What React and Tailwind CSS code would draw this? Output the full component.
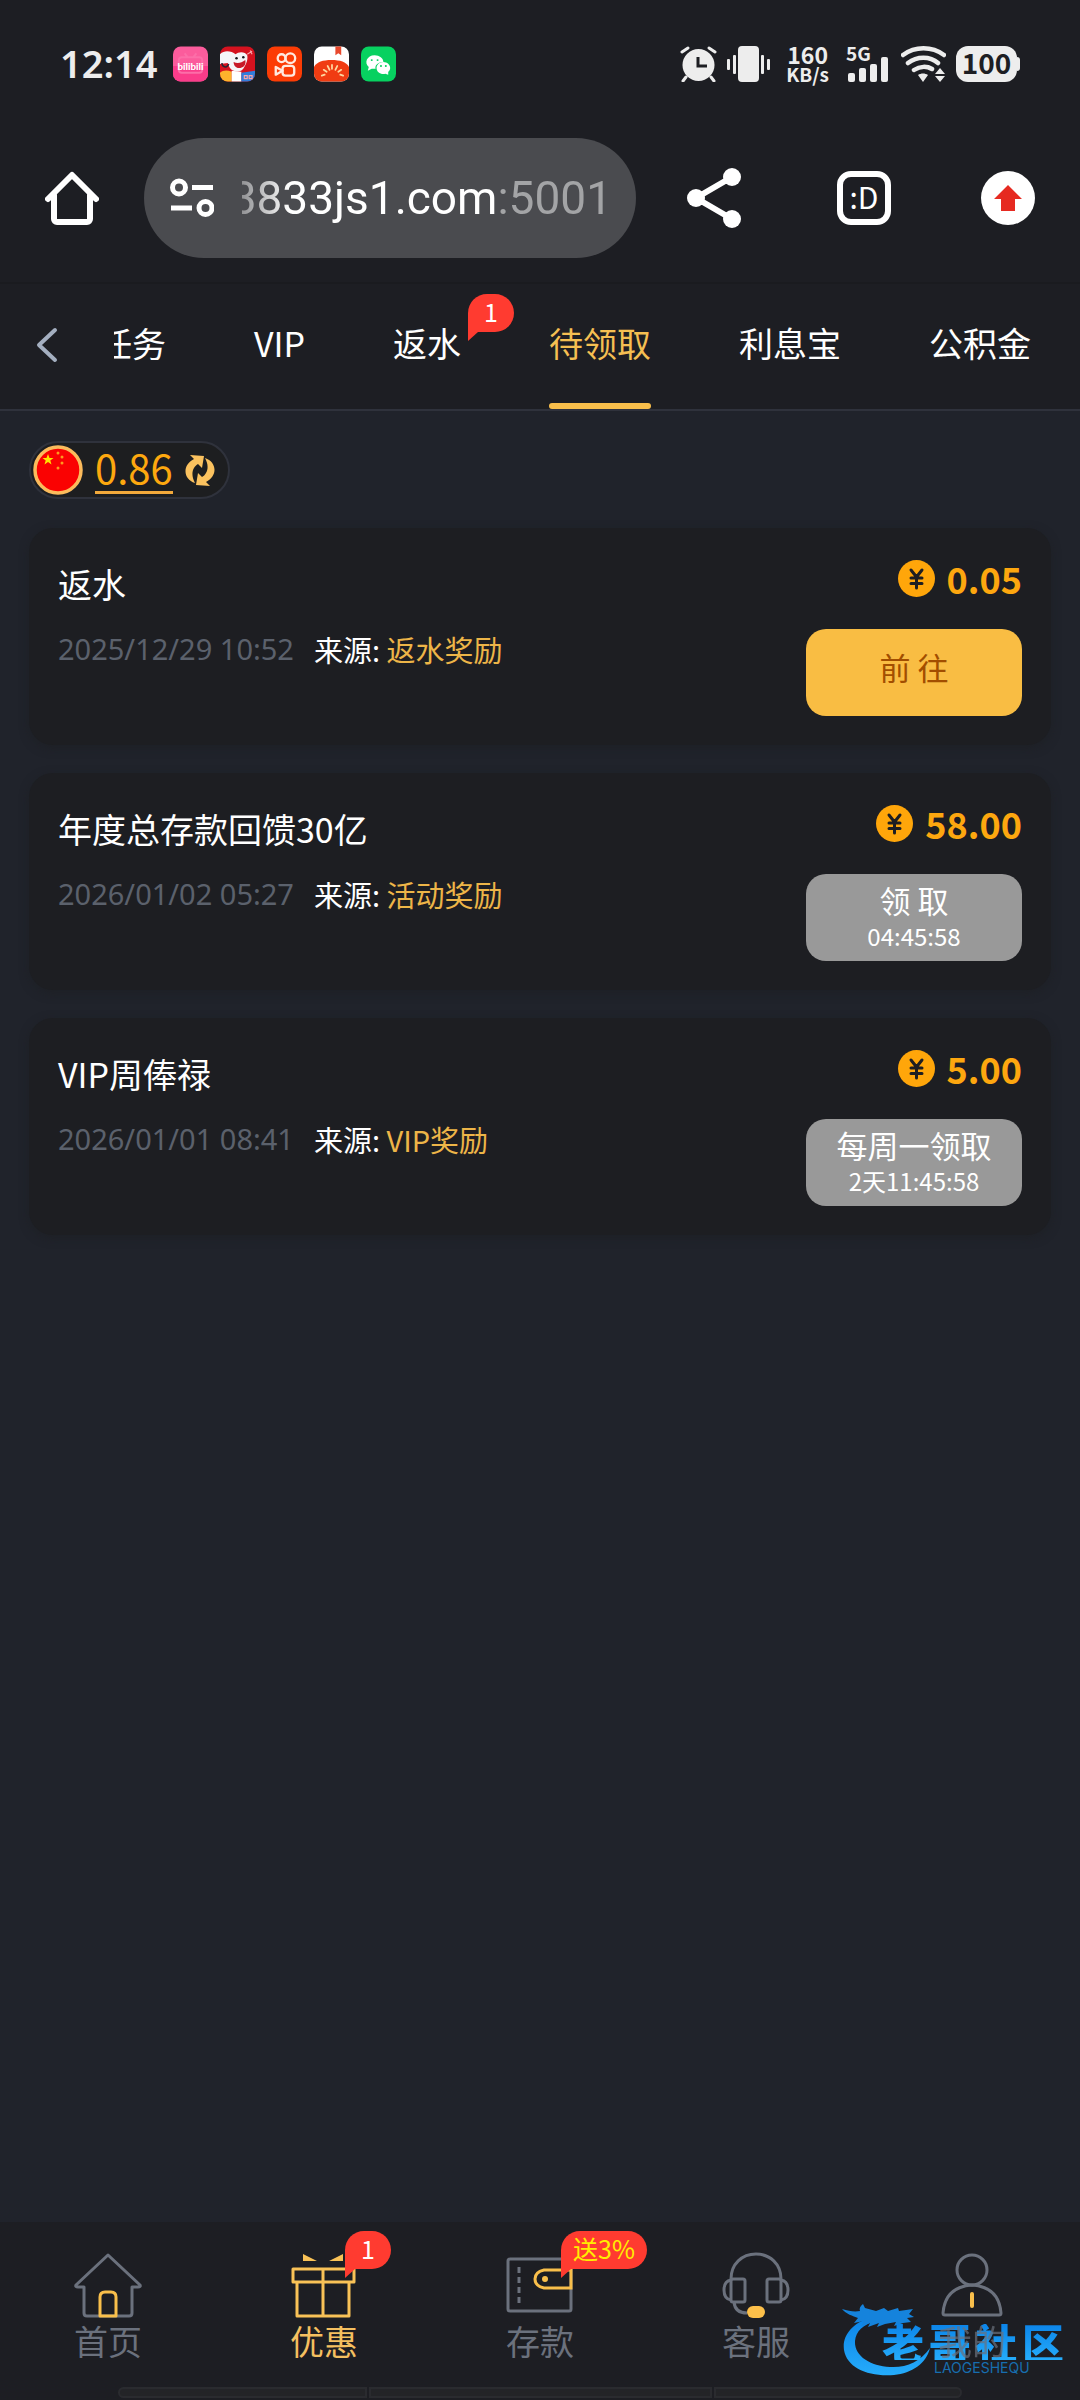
const tabs = [
    { name: "任务" },
    { name: "VIP" },
    { name: "返水", badge: "1" },
    { name: "待领取", active: true },
    { name: "利息宝" },
    { name: "公积金" },
];

const rewards = [
    { title: "返水", date: "2025/12/29 10:52", source: "返水奖励", amount: "0.05", action: "前 往", ready: true },
    { title: "年度总存款回馈30亿", date: "2026/01/02 05:27", source: "活动奖励", amount: "58.00", action: "领 取", timer: "04:45:58" },
    { title: "VIP周俸禄", date: "2026/01/01 08:41", source: "VIP奖励", amount: "5.00", action: "每周一领取", timer: "2天11:45:58" },
];

const navItems = [
    { name: "首页", icon: NavHome },
    { name: "优惠", icon: NavGift, badge: "1", active: true },
    { name: "存款", icon: NavWallet, badge: "送3%", yellow: true },
    { name: "客服", icon: NavSupport },
    { name: "我的", icon: NavUser, faded: true },
];

function AppIcons() {
    return (
        <div className="flex gap-3">
            <svg className="h-9 w-[35px]" viewBox="0 0 36 36">
                <rect width="36" height="36" rx="8" fill="#fb5c9c" />
                <path d="M0 20h36v8a8 8 0 0 1-8 8H8a8 8 0 0 1-8-8z" fill="#fa3c8a" />
                <path d="M12 7l3 4M24 7l-3 4M9 11h18a3 3 0 0 1 3 3v10a3 3 0 0 1-3 3H9a3 3 0 0 1-3-3V14a3 3 0 0 1 3-3z" fill="none" stroke="#fc6ea8" strokeWidth="2" />
                <text x="18" y="24" textAnchor="middle" fontSize="10" fontWeight="900" fontFamily="Lato, sans-serif" fill="#fff">bilibili</text>
            </svg>
            <svg className="h-9 w-[35px]" viewBox="0 0 36 36">
                <rect width="36" height="36" rx="8" fill="#d5121f" />
                <path d="M0 8C5 3 12 5 16 8c3-3 10-3 12 1 1 4-1 9-3 12-2 4-6 6-11 4C11 24 9 21 8 17L0 18z" fill="#f5f5f8" />
                <path d="M0 27c3-3 8-3 12-1v10H8a8 8 0 0 1-8-8z" fill="#fdb32c" />
                <path d="M12 25l10 1v10H12z" fill="#fff" />
                <path d="M22 27l14-2v3a8 8 0 0 1-8 8h-6z" fill="#317ddc" />
                <path d="M14 16c4 2 8 1 12-2 1 4-1 8-5 8-4 1-7-2-7-6z" fill="#c81a28" />
                <path d="M2 17c0 4 5 6 7 1" fill="none" stroke="#292532" strokeWidth="1.5" />
                <circle cx="17" cy="12" r="1.3" fill="#17171c" />
                <circle cx="24" cy="11" r="1.3" fill="#17171c" />
                <path d="M28 8l5-3M31 4l2 4M25 30h3v3h-3zM30 30h3v3h-3z" fill="none" stroke="#fba3a8" strokeWidth="1.2" />
            </svg>
            <svg className="h-9 w-[35px]" viewBox="0 0 36 36">
                <rect width="36" height="36" rx="8" fill="#fc3c05" />
                <g fill="none" stroke="#ffe9df" strokeWidth="2.4" strokeLinejoin="round">
                    <circle cx="15" cy="12" r="4" />
                    <circle cx="24" cy="12" r="5" />
                    <rect x="16" y="20" width="12" height="10" rx="3" />
                    <path d="M16 25l-7-4v8z" />
                </g>
            </svg>
            <svg className="h-9 w-[35px]" viewBox="0 0 36 36">
                <rect width="36" height="36" rx="8" fill="#fff" />
                <path d="M22 0h6v9l-3-2-3 2z" fill="#e8482c" />
                <path d="M0 21c3-5 9-7 18-7s15 2 18 7v7a8 8 0 0 1-8 8H8a8 8 0 0 1-8-8z" fill="#f03c12" />
                <path d="M8 30l3-1M10 24l3 2M14 20l2 4M18.500 19v4M24 20l-2 4M28 24l-3 2M30 30l-3-1" stroke="#ffd9a0" strokeWidth="1.8" strokeLinecap="round" />
            </svg>
            <svg className="h-9 w-[35px]" viewBox="0 0 36 36">
                <rect width="36" height="36" rx="8" fill="#07d160" />
                <path d="M14 9c5 0 9 3 9 7-5 0-9 3-8 7h-4l-4 2 1-4c-5-4-2-12 6-12z" fill="#fff" />
                <path d="M23 16c4 0 7 3 7 6 0 2-1 3-2 4v3l-3-1c-5 1-9-2-9-6 0-3 3-6 7-6z" fill="#fff" />
                <path d="M11 14h.1M17 14h.1M20.500 20h.1M25.500 20h.1" stroke="#07d160" strokeWidth="2" strokeLinecap="round" />
            </svg>
        </div>
    );
}

function StatusBar() {
    return (
        <div className="flex h-[128px] items-center justify-between pr-[60px] pl-[60px]">
            <div className="flex items-center gap-4">
                <span className="pb-0.5 font-['Noto_Sans','Noto_Sans_CJK_SC',sans-serif] text-[38px] leading-none font-semibold text-[#ededed]">12:14</span>
                <AppIcons />
            </div>
            <div className="flex items-center text-[#ededed]">
                <svg className="h-9 w-[37px]" viewBox="0 0 37 36" fill="none">
                    <circle cx="18.500" cy="19" r="16" fill="currentColor" />
                    <path d="M2 6l6-4M35 6l-6-4M6 31l-3 4M31 31l3 4" stroke="currentColor" strokeWidth="3" strokeLinecap="round" />
                    <path d="M18 11v9h9" stroke="#1d1e23" strokeWidth="3" />
                </svg>
                <svg className="ml-2.5 h-9 w-[43px]" viewBox="0 0 43 36" fill="currentColor">
                    <rect x="11" width="21" height="36" rx="4" />
                    <rect x="6" y="9" width="3" height="19" rx="1" />
                    <rect x="34" y="9" width="3" height="19" rx="1" />
                    <rect x="0" y="13" width="3" height="11" rx="1" />
                    <rect x="40" y="13" width="3" height="11" rx="1" />
                </svg>
                <div className="ml-4 flex flex-col items-center pb-0.5 font-bold">
                    <span className="text-[23px] leading-[22px]">160</span>
                    <span className="text-[19px] leading-[18px]">KB/s</span>
                </div>
                <svg className="ml-[17px] h-9 w-[43px] overflow-visible" viewBox="0 0 43 36" fill="currentColor">
                    <text x="0" y="15" fontSize="19" fontWeight="700">5G</text>
                    <rect x="2" y="27" width="7" height="9" rx="2" />
                    <rect x="13" y="22" width="7" height="14" rx="2" />
                    <rect x="24" y="18" width="7" height="18" rx="2" />
                    <rect x="35" y="11" width="7" height="25" rx="2" />
                </svg>
                <svg className="ml-3 h-9 w-[45px]" viewBox="0 0 45 36" fill="none">
                    <path d="M2 9c12-9 29-9 41 0M7 17c9-7 22-7 30 0M13 24c6-4 13-4 18-1" stroke="currentColor" strokeWidth="4.500" strokeLinecap="round" />
                    <path d="M17 29c3-2 7-2 10 0l-5 7zM34 28l5-6 5 6zM34 30h10l-5 6z" fill="currentColor" />
                </svg>
                <div className="ml-2.5 flex items-center">
                    <span className="flex h-9 w-[61px] items-center justify-center rounded-xl bg-[#ededed] pb-1 text-[28px] leading-none font-bold text-[#1d1e23]">100</span>
                    <span className="h-3.5 w-[3px] rounded-r-sm bg-[#ededed]" />
                </div>
            </div>
        </div>
    );
}

function BrowserBar() {
    return (
        <div className="flex items-center border-b-2 border-[#1a1b1f] px-[45px] pt-2.5 pb-6 text-white">
            <button aria-label="主页">
                <svg className="size-[54px]" viewBox="0 0 54 54" fill="none" stroke="currentColor" strokeWidth="6" strokeLinejoin="round" strokeLinecap="round">
                    <path d="M3 28L27 4l24 24M9 24v24a3 3 0 0 0 3 3h30a3 3 0 0 0 3-3V24" />
                </svg>
            </button>
            <button className="ml-[45px] flex h-[120px] min-w-0 flex-1 items-center gap-7 rounded-full bg-[#4a4b4f] pr-6 pl-[26px]">
                <svg className="h-10 w-11 shrink-0" viewBox="0 0 44 40" fill="none" stroke="currentColor" strokeWidth="5">
                    <circle cx="9" cy="9.500" r="6.500" />
                    <circle cx="35.500" cy="30" r="6.500" />
                    <path d="M22 9.500h21M1 30h21" />
                </svg>
                <span className="flex min-w-0 flex-1 justify-end overflow-hidden font-[Roboto,'Noto_Sans_CJK_SC',sans-serif] text-[46px] leading-[60px] whitespace-nowrap [mask-image:linear-gradient(to_right,#0006,black_48px)]">
                    3833js1.com<span className="text-[#a3a4a6]">:5001</span>
                </span>
            </button>
            <button aria-label="分享" className="ml-[51px]">
                <svg className="h-[60px] w-[54px]" viewBox="0 0 54 60" fill="currentColor">
                    <path d="M45 9L9 30l36 21" fill="none" stroke="currentColor" strokeWidth="6" />
                    <circle cx="45" cy="9" r="9" />
                    <circle cx="9" cy="30" r="9" />
                    <circle cx="45" cy="51" r="9" />
                </svg>
            </button>
            <button className="ml-24 flex size-[54px] items-center justify-center rounded-[14px] border-[6px] border-white pb-1 text-[30px] leading-none">:D</button>
            <button aria-label="更新" className="ml-[90px] flex size-[54px] items-center justify-center rounded-full bg-white">
                <svg className="h-[26px] w-7" viewBox="0 0 28 26" fill="#e62a21">
                    <path d="M14 0l14 14h-7v12H7V14H0z" />
                </svg>
            </button>
        </div>
    );
}

function Badge({ children, yellow }) {
    return (
        <span className={`flex h-[38px] min-w-[46px] items-center justify-center rounded-full rounded-bl-none bg-[#ff3b30] px-3 pb-1 text-[25px] leading-none whitespace-nowrap ${yellow ? "text-[#ffee00]" : "text-white"}`}>
            {children}
            <svg className="absolute top-full left-0 h-[9px] w-2.5" viewBox="0 0 10 9" fill="#ff3b30">
                <path d="M0 0h10L0 9z" />
            </svg>
        </span>
    );
}

function TabBar() {
    return (
        <div className="flex h-[127px] items-stretch border-b-2 border-[#2f323c]">
            <button aria-label="返回" className="flex w-[114px] shrink-0 items-center pb-1 pl-9 text-[#a4afc0]">
                <svg className="h-9 w-[22px]" viewBox="0 0 22 36" fill="none" stroke="currentColor" strokeWidth="4" strokeLinecap="round" strokeLinejoin="round">
                    <path d="M19 3L3 18l16 15" />
                </svg>
            </button>
            <div className="flex min-w-0 flex-1 overflow-hidden">
                <div className="-ml-4 flex gap-[88px]">
                    {tabs.map((tab) => (
                        <button key={tab.name} className={`relative shrink-0 pb-2 text-[34px] leading-none whitespace-nowrap ${tab.active ? "text-[#f5bf52]" : "text-white"}`}>
                            {tab.name}
                            {tab.active && <span className="absolute inset-x-0 bottom-0 h-1.5 rounded-full bg-[#f9bf4b]" />}
                            {tab.badge && <span className="absolute top-2.5 left-full ml-[7px]"><Badge>{tab.badge}</Badge></span>}
                        </button>
                    ))}
                </div>
            </div>
        </div>
    );
}

function Balance() {
    return (
        <div className="flex h-[58px] w-[201px] items-center rounded-full border-2 border-[#2f323c] bg-[#1d1e20] pl-0.5">
            <svg className="size-[50px]" viewBox="0 0 50 50">
                <circle cx="25" cy="25" r="23" fill="#fa0202" stroke="#fbbb5c" strokeWidth="3.500" />
                <path d="M15 9l1.500 4h4l-3.200 2.500 1.200 4L15 17l-3.500 2.500 1.200-4L9.500 13h4z" fill="#ffe600" />
                <g fill="#ff9a1f">
                    <circle cx="25" cy="8" r="1.500" />
                    <circle cx="29" cy="12" r="1.500" />
                    <circle cx="29" cy="18" r="1.500" />
                    <circle cx="25" cy="23" r="1.500" />
                </g>
            </svg>
            <span className="ml-3 border-b-3 border-[#f2a93b] pb-1 text-[40px] leading-10 text-[#fda80f]">0.86</span>
            <button aria-label="刷新" className="ml-3">
                <svg className="h-[31px] w-[30px]" viewBox="0 0 30 31" fill="#fbc25f">
                    <path d="M5 0l14 1-2 12-4-4c-5 3-8 10-3 19C-2 24-3 10 9 4z" />
                    <path d="M25 31l-14-1 2-12 4 4c5-3 8-10 3-19 12 4 13 18 1 24z" />
                </svg>
            </button>
        </div>
    );
}

function RewardCard({ reward }) {
    return (
        <li className="flex h-[217px] justify-between rounded-3xl bg-[#1d1e22] px-[29px] shadow-[0_3px_10px_#1d1e2299]">
            <div className="flex flex-col gap-[22px] pt-[33px]">
                <h2 className="text-[34px] leading-[46px] text-white">{reward.title}</h2>
                <p className="flex gap-5 text-[29px] leading-10 text-white">
                    <time className="font-['Noto_Sans',sans-serif] text-[#5b616c]">{reward.date}</time>
                    <span>来源: <span className="text-[#edb548]">{reward.source}</span></span>
                </p>
            </div>
            <div className="flex flex-col items-end gap-[25px] pt-6">
                <div className="flex items-center gap-3">
                    <svg className="size-[37px]" viewBox="0 0 37 37" fill="none">
                        <circle cx="18.500" cy="18.500" r="18.500" fill="#ffa60a" />
                        <path d="M13 10l5.500 7 5.500-7M18.500 17v11M13 18h11M13 23.500h11" stroke="#1d1e22" strokeWidth="3" strokeLinecap="round" />
                    </svg>
                    <strong className="text-4xl leading-[52px] font-bold text-[#fda70f]">{reward.amount}</strong>
                </div>
                <button className={`flex h-[87px] w-[216px] flex-col items-center rounded-[20px] text-[31px] ${reward.ready ? "bg-[#f9bd43] pt-5 text-[#a24e00]" : "bg-[#999999] pt-2 text-white"}`}>
                    <span className="leading-9">{reward.action}</span>
                    {reward.timer && <span className="text-2xl leading-9">{reward.timer}</span>}
                </button>
            </div>
        </li>
    );
}

function NavHome() {
    return (
        <svg className="h-[66px] w-[68px]" viewBox="0 0 68 66" fill="none" stroke="#6b717d" strokeWidth="3" strokeLinejoin="round">
            <path d="M34 3L2 33q-1 2 2 2h6v26q0 3 3 3h42q3 0 3-3V35h6q3 0 2-2z" />
            <path d="M26 64V45q0-5 5-5h6q5 0 5 5v19z" stroke="#f9bf4b" strokeWidth="3" />
        </svg>
    );
}

function NavGift() {
    return (
        <svg className="h-[66px] w-[68px]" viewBox="0 0 68 66" fill="none" stroke="#f9c257" strokeWidth="3" strokeLinejoin="round">
            <rect x="3" y="17" width="61" height="13" />
            <path d="M7 30v34h52V30M33 17v47" />
            <path d="M13 2v7h14zM53 2v7H39z" fill="#f9c257" stroke="none" />
        </svg>
    );
}

function NavWallet() {
    return (
        <svg className="h-[66px] w-[68px]" viewBox="0 0 68 66" fill="none" stroke="#6b717d" strokeWidth="3">
            <rect x="2" y="7" width="63" height="52" rx="2" />
            <path d="M13 15v36" strokeDasharray="6 4" />
            <path d="M65 18H38q-9 2-9 9t9 9h27z" stroke="#f9bf4b" strokeWidth="3" />
            <circle cx="39" cy="27" r="3" fill="#f9bf4b" stroke="none" />
        </svg>
    );
}

function NavSupport() {
    return (
        <svg className="h-[66px] w-[68px]" viewBox="0 0 68 66" fill="none" stroke="#6b717d" strokeWidth="3">
            <path d="M9 27C9 12 20 2 34 2s25 10 25 25" />
            <rect x="9" y="27" width="14" height="23" rx="2" />
            <rect x="45" y="27" width="14" height="23" rx="2" />
            <path d="M9 28q-7 1-7 10t7 10M59 28q7 1 7 10t-7 10M12 50q1 11 13 11" />
            <rect x="25" y="54" width="18" height="12" rx="6" fill="#fdc04a" stroke="none" />
        </svg>
    );
}

function NavUser() {
    return (
        <svg className="h-[66px] w-[68px]" viewBox="0 0 68 66" fill="none" stroke="#6b717d" strokeWidth="3" strokeLinejoin="round">
            <circle cx="34" cy="18" r="15" />
            <path d="M5 61q2-26 29-28 27 2 29 28 0 2-2 2H7q-2 0-2-2z" />
            <path d="M34 42v12" stroke="#f9bf4b" strokeWidth="4" strokeLinecap="round" />
        </svg>
    );
}

function SiteMark() {
    return (
        <div className="pointer-events-none absolute right-4 bottom-6 h-[72px] w-[222px]">
            <svg className="h-full w-full" viewBox="0 0 222 72">
                <defs>
                    <linearGradient id="mark" x1="0" y1="0" x2="0" y2="1">
                        <stop offset="0" stopColor="#0c84e8" />
                        <stop offset="1" stopColor="#25acfb" />
                    </linearGradient>
                </defs>
                <path d="M28 14C10 19 0 32 2 46c3 18 24 27 50 25 18-2 32-11 36-27-10 14-24 20-40 19C28 62 12 52 13 37c1-10 8-16 20-20z" fill="url(#mark)" />
                <path d="M0 5c7 2 12 3 18 2-1-2 0-5 3-7l2 4 11 3 8-3 4 3 10-3 1 3 14-2-4 5 5 3-7 1 4 4-8 1-9 3 2-4-11 2-8 3 2-4-11 4 2-4-9 3 3-5-10 2 4-5C11 12 4 10 0 5z" fill="#1583dc" />
            </svg>
            <div className="absolute top-5 right-0 left-10 flex justify-between bg-linear-to-b from-[#0c84e8] to-[#25acfb] bg-clip-text text-[42px] leading-9 font-black text-transparent">
                <span>老</span><span>哥</span><span>社</span><span>区</span>
            </div>
            <span className="absolute top-[58px] left-[92px] font-[Inter,sans-serif] text-sm leading-3 text-[#176eb0]">LAOGESHEQU</span>
        </div>
    );
}

function BottomNav() {
    return (
        <nav className="relative mt-auto bg-[#1d1e23]">
            <SiteMark />
            <div className="grid h-[165px] grid-cols-5 pt-[30px]">
                {navItems.map((item) => (
                    <a key={item.name} href="#" className={`flex flex-col items-center gap-[5px] ${item.active ? "text-[#f5c060]" : "text-[#6b717d]"}`}>
                        <span className="relative">
                            <item.icon />
                            {item.badge && <span className="absolute -top-[21px] left-[55px]"><Badge yellow={item.yellow}>{item.badge}</Badge></span>}
                        </span>
                        <span className={`relative text-[34px] leading-9 ${item.faded ? "opacity-70" : ""}`}>{item.name}</span>
                    </a>
                ))}
            </div>
            <div className="flex gap-0.5 pr-[118px] pb-0.5 pl-[118px]">
                <span className="h-[11px] flex-1 rounded-l-md border-2 border-[#2a2b2f] bg-[#232427]" />
                <span className="h-[11px] w-[343px] border-2 border-[#2a2b2f] bg-[#232427]" />
                <span className="h-[11px] flex-1 rounded-r-md border-2 border-[#2a2b2f] bg-[#232427]" />
            </div>
        </nav>
    );
}

export default function App() {
    return (
        <div className="flex min-h-screen flex-col bg-[#20232b] font-['Noto_Sans_CJK_SC','Noto_Sans',sans-serif]">
            <header className="bg-[#1d1e23]">
                <StatusBar />
                <BrowserBar />
                <TabBar />
            </header>
            <main className="px-[29px] pt-[30px] pb-8">
                <Balance />
                <ul className="mt-[29px] flex flex-col gap-7">
                    {rewards.map((reward) => <RewardCard key={reward.title} reward={reward} />)}
                </ul>
            </main>
            <BottomNav />
        </div>
    );
}
